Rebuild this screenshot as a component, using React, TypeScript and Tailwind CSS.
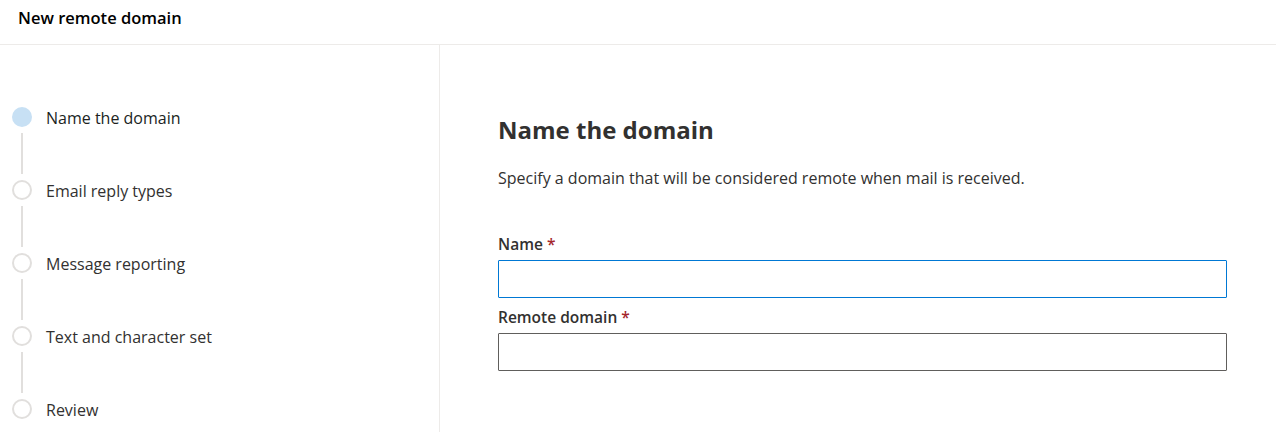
import React from "react";

const steps = [
  "Name the domain",
  "Email reply types",
  "Message reporting",
  "Text and character set",
  "Review",
];

export default function App() {
  return (
    <div
      className="w-[1276px] h-[432px] bg-white overflow-hidden text-[#323130]"
      style={{ fontFamily: '"Segoe UI", "Open Sans", "Noto Sans", sans-serif' }}
    >
      <div className="h-[45px] border-b border-[#edebe9] pl-[18px] pt-[8px]">
        <span className="block text-[16.5px] font-semibold text-black leading-[20px]">New remote domain</span>
      </div>
      <div className="flex h-[387px]">
        <div className="w-[440px] border-r border-[#edebe9] pt-[62px] pl-[12px]">
          {steps.map((s, i) => (
            <div key={s}>
              <div className="flex items-center gap-[14px] h-[20px]">
                {i === 0 ? (
                  <div className="w-[20px] h-[20px] rounded-full bg-[#c7e0f4]" />
                ) : (
                  <div className="w-[20px] h-[20px] rounded-full border-2 border-[#e1dfdd] bg-white" />
                )}
                <span
                  className={
                    "text-[16px] leading-none mt-[2px] " +
                    (i === 0 ? "text-[#201f1e]" : "text-[#323130]")
                  }
                >
                  {s}
                </span>
              </div>
              {i < steps.length - 1 && (
                <div className="ml-[9px] w-[2px] h-[41px] my-[6px] bg-[#e1dfdd]" />
              )}
            </div>
          ))}
        </div>
        <div className="flex-1 pl-[58px] pr-[49px] pt-[70px]">
          <h1 className="text-[24px] font-bold leading-[30px] text-[#323130]">Name the domain</h1>
          <p className="mt-[23px] text-[16px] leading-[20px] text-[#323130]">
            Specify a domain that will be considered remote when mail is received.
          </p>
          <div className="mt-[46px]">
            <label className="block text-[15.5px] font-semibold leading-[20px] text-[#323130]">
              Name <span className="text-[#a4262c]">*</span>
            </label>
            <div className="mt-[6px] h-[38px] border border-[#0078d4] rounded-[1px]" />
          </div>
          <div className="mt-[9px]">
            <label className="block text-[15.5px] font-semibold leading-[20px] text-[#323130]">
              Remote domain <span className="text-[#a4262c]">*</span>
            </label>
            <div className="mt-[6px] h-[38px] border border-[#605e5c] rounded-[1px]" />
          </div>
        </div>
      </div>
    </div>
  );
}
